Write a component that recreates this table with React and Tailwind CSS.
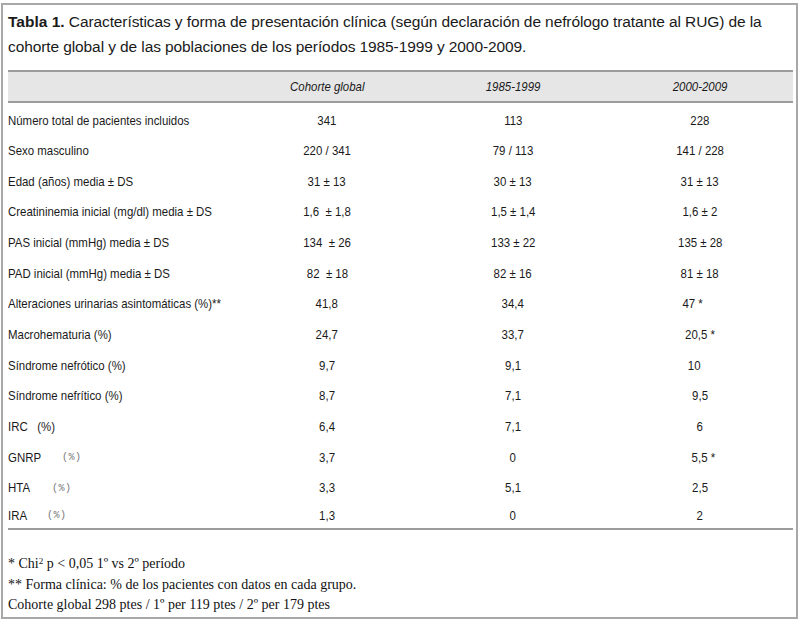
import React from "react";

const rows = [
  ["Número total de pacientes incluidos", "341", "113", "228"],
  ["Sexo masculino", "220 / 341", "79 / 113", "141 / 228"],
  ["Edad (años) media ± DS", "31 ± 13", "30 ± 13", "31 ± 13"],
  ["Creatininemia inicial (mg/dl) media ± DS", "1,6  ± 1,8", "1,5 ± 1,4", "1,6 ± 2"],
  ["PAS inicial (mmHg) media ± DS", "134  ± 26", "133 ± 22", "135 ± 28"],
  ["PAD inicial (mmHg) media ± DS", "82  ± 18", "82 ± 16", "81 ± 18"],
  ["Alteraciones urinarias asintomáticas (%)**", "41,8", "34,4", "47 *", null, "pr-[14px]"],
  ["Macrohematuria (%)", "24,7", "33,7", "20,5 *"],
  ["Síndrome nefrótico (%)", "9,7", "9,1", "10", null, "pr-[12px]"],
  ["Síndrome nefrítico (%)", "8,7", "7,1", "9,5"],
  ["IRC   (%)", "6,4", "7,1", "6"],
  ["GNRP", "3,7", "0", "5,5 *", "w-[54px]", "pl-[6px]"],
  ["HTA", "3,3", "5,1", "2,5", "w-[44px]"],
  ["IRA", "1,3", "0", "2", "w-[39px]"],
];

const narrow = { fontFamily: '"Liberation Sans", Arial, sans-serif' };

function N({ children, left }) {
  return (
    <span
      className={
        "inline-block whitespace-pre scale-x-[0.88] " +
        (left ? "origin-left" : "origin-center")
      }
    >
      {children}
    </span>
  );
}

const cols = "grid grid-cols-[242px_154px_218px_156px_1fr] items-center";

export default function App() {
  return (
    <div className="w-[800px] h-[626px] bg-white pt-[3px] pl-[1px]">
      <div className="w-[797px] h-[616px] border-2 border-[#a8a8a8] bg-white pl-[5px] pr-[3px] text-[#1a1a1a]">
        <p
          className="pt-[4px] text-[15.5px] leading-[25px] tracking-[-0.1px]"
          style={{ fontFamily: '"Liberation Sans", Arial, sans-serif' }}
        >
          <b className="font-bold tracking-normal">Tabla 1.</b>
          <span>
            {" "}
            Características y forma de presentación clínica (según declaración de nefrólogo tratante al RUG) de la
            cohorte global y de las poblaciones de los períodos 1985-1999 y 2000-2009.
          </span>
        </p>

        <div className="mt-[11px] text-[13px]" style={narrow}>
          <div className={"border-t-2 border-b-2 border-[#9c9c9c] bg-[#e6e6e6] h-[33px] italic " + cols}>
            <div></div>
            <div className="text-center">
              <N>Cohorte global</N>
            </div>
            <div className="text-center">
              <N>1985-1999</N>
            </div>
            <div className="text-center">
              <N>2000-2009</N>
            </div>
            <div></div>
          </div>
          <div className="pt-[2px] border-b-2 border-[#9c9c9c]">
            {rows.map((r, i) => (
              <div key={i} className={cols + (i === rows.length - 1 ? " h-[25px]" : " h-[30.65px]")}>
                <div className="flex items-center whitespace-pre">
                  {r[4] ? (
                    <>
                      <span className={r[4]}>
                        <N left>{r[0]}</N>
                      </span>
                      <span
                        className="text-[10px] text-[#777] tracking-[0.5px]"
                        style={{ fontFamily: '"Liberation Mono", monospace' }}
                      >
                        (%)
                      </span>
                    </>
                  ) : (
                    <N left>{r[0]}</N>
                  )}
                </div>
                <div className="text-center">
                  <N>{r[1]}</N>
                </div>
                <div className="text-center">
                  <N>{r[2]}</N>
                </div>
                <div className={"text-center " + (r[5] || "")}>
                  <N>{r[3]}</N>
                </div>
                <div></div>
              </div>
            ))}
          </div>
        </div>

        <div
          className="mt-[24px] text-[14px] leading-[20.5px] text-[#111]"
          style={{ fontFamily: '"Liberation Serif", "Times New Roman", serif' }}
        >
          <div>
            * Chi<sup className="text-[9px]">2</sup> p &lt; 0,05 1º vs 2º período
          </div>
          <div>** Forma clínica: % de los pacientes con datos en cada grupo.</div>
          <div>Cohorte global 298 ptes / 1º per 119 ptes / 2º per 179 ptes</div>
        </div>
      </div>
    </div>
  );
}
